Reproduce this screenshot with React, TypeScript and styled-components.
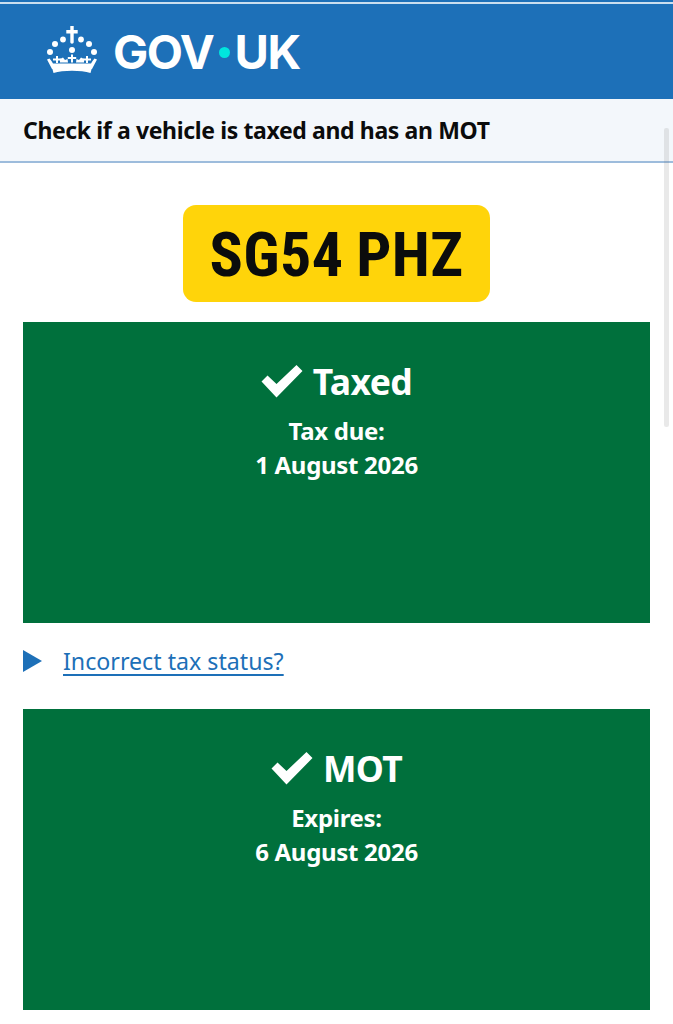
import React from "react";
import styled, { createGlobalStyle } from "styled-components";

const Global = createGlobalStyle`
  html, body { margin: 0; padding: 0; background: #fff; }
  body { font-family: "Noto Sans", "Open Sans", Arial, sans-serif; overflow: hidden; }
`;

const Page = styled.div`
  position: relative;
  width: 673px;
  height: 1024px;
  overflow: hidden;
  background: #fff;
`;

const Header = styled.header`
  box-sizing: border-box;
  height: 99px;
  background: #1d70b8;
  border-top: 2px solid #1d70b8;
  display: flex;
  flex-direction: column;
`;

const TopLine = styled.div`
  height: 2px;
  background: #c9deef;
  flex: none;
`;

const Brand = styled.div`
  display: flex;
  align-items: center;
  flex: 1;
  padding: 0 0 0 46px;
  gap: 15px;
`;

const Wordmark = styled.span`
  display: inline-flex;
  align-items: center;
  font-family: Inter, "Liberation Sans", sans-serif;
  font-weight: 700;
  font-size: 47px;
  line-height: 1;
  letter-spacing: -1.4px;
  color: #fff;
`;

const Dot = styled.span`
  display: inline-block;
  width: 11px;
  height: 11px;
  border-radius: 50%;
  background: #00e5de;
  margin: 2px 5px 0 5px;
`;

const ServiceBar = styled.div`
  box-sizing: border-box;
  height: 64px;
  background: #f3f7fb;
  border-bottom: 2px solid #9dbcdc;
  padding: 0 23px;
  display: flex;
  align-items: center;
`;

const ServiceName = styled.div`
  font-weight: 700;
  font-size: 23px;
  letter-spacing: -0.37px;
  color: #0b0c0c;
`;

const Main = styled.main`
  padding: 42px 23px 0 23px;
  display: flex;
  flex-direction: column;
  align-items: stretch;
`;

const Plate = styled.div`
  box-sizing: border-box;
  align-self: center;
  width: 307px;
  height: 97px;
  padding-top: 2px;
  border-radius: 13px;
  background: #ffd40a;
  display: flex;
  align-items: center;
  justify-content: center;
  font-family: "Roboto Condensed", Roboto, "Liberation Sans Narrow", sans-serif;
  font-weight: 700;
  font-size: 62px;
  letter-spacing: 0.4px;
  word-spacing: -2px;
  color: #0b0c0c;
  margin-bottom: 20px;
`;

const Panel = styled.section`
  box-sizing: border-box;
  height: 301px;
  background: #00703c;
  color: #fff;
  padding-top: 36px;
  text-align: center;
`;

const PanelTitle = styled.div`
  display: flex;
  justify-content: center;
  align-items: center;
  gap: 10px;
  height: 46px;
  font-weight: 700;
  font-size: 35.500px;
  letter-spacing: -0.6px;
`;

const PanelText = styled.div`
  margin-top: 10px;
  font-weight: 700;
  font-size: 24px;
  line-height: 34px;
  letter-spacing: -0.3px;
`;

const Details = styled.div`
  height: 86px;
  display: flex;
  align-items: center;
  gap: 21px;
  padding-bottom: 10px;
  box-sizing: border-box;
`;

const Arrow = styled.span`
  width: 0;
  height: 0;
  border-style: solid;
  border-width: 11px 0 11px 19px;
  border-color: transparent transparent transparent #1d70b8;
`;

const DetailsLink = styled.a`
  font-size: 23.200px;
  line-height: 30px;
  color: #1d70b8;
  text-decoration: underline;
  text-decoration-thickness: 1.500px;
  text-underline-offset: 4px;
`;

const ScrollThumb = styled.div`
  position: absolute;
  left: 664px;
  top: 128px;
  width: 5px;
  height: 299px;
  border-radius: 2px;
  background: rgba(120, 120, 120, 0.16);
`;

const CrownSvg = styled.svg`
  margin-top: -4px;
  flex: none;
`;

const Crown = () => (
  <CrownSvg width="52" height="48" viewBox="0 0 52 48" fill="#fff" aria-hidden="true">
    <path d="M24.300 0h3.400v4h4v3.400h-4v8.600c0 1-.7 1.700-1.700 1.700s-1.700-.7-1.700-1.700V7.400h-4V4h4z" />
    <circle cx="17" cy="13.500" r="2.900" />
    <circle cx="35" cy="13.500" r="2.900" />
    <circle cx="9" cy="18" r="3" />
    <circle cx="43" cy="18" r="3" />
    <circle cx="4" cy="26" r="3" />
    <circle cx="48" cy="26" r="3" />
    <circle cx="26" cy="24" r="3" />
    <path d="M25 28.500h2V31h3.200v2H27v3.500h-2V33h-3.200v-2H25z" />
    <path d="M10 30h2v2.500h3v2h-3V37h-2v-2.500H7v-2h3z" />
    <path d="M40 30h2v2.500h3v2h-3V37h-2v-2.500h-3v-2h3z" />
    <path d="M1 33.500l2.500-1 2 2.500 1.500 2.500h38l1.500-2.500 2-2.500 2.500 1-5 9.500H6z" />
    <path d="M14 33l3-1.500 2 2.500 2.500-1 .5 3.500h-8z" />
    <path d="M38 33l-3-1.500-2 2.500-2.500-1-.5 3.500h8z" />
    <path d="M6 41.500C12 39.800 19 39 26 39s14 .8 20 2.500L44.500 47C39.500 45.500 33 44.700 26 44.700S12.500 45.500 7.500 47z" />
  </CrownSvg>
);

const Tick = () => (
  <svg width="42" height="34" viewBox="0 0 42 34" aria-hidden="true">
    <path d="M0.500 17.500L6.500 11.500L15.500 20L35.500 1L41.500 7L15.500 33.500z" fill="#fff" />
  </svg>
);

export default function App() {
  return (
    <Page>
      <Global />
      <Header>
        <TopLine />
        <Brand>
          <Crown />
          <Wordmark>
            GOV<Dot />UK
          </Wordmark>
        </Brand>
      </Header>
      <ServiceBar>
        <ServiceName>Check if a vehicle is taxed and has an MOT</ServiceName>
      </ServiceBar>
      <Main>
        <Plate>SG54 PHZ</Plate>
        <Panel>
          <PanelTitle>
            <Tick />
            Taxed
          </PanelTitle>
          <PanelText>
            Tax due:
            <br />1 August 2026
          </PanelText>
        </Panel>
        <Details>
          <Arrow />
          <DetailsLink href="#">Incorrect tax status?</DetailsLink>
        </Details>
        <Panel>
          <PanelTitle>
            <Tick />
            MOT
          </PanelTitle>
          <PanelText>
            Expires:
            <br />6 August 2026
          </PanelText>
        </Panel>
      </Main>
      <ScrollThumb />
    </Page>
  );
}
